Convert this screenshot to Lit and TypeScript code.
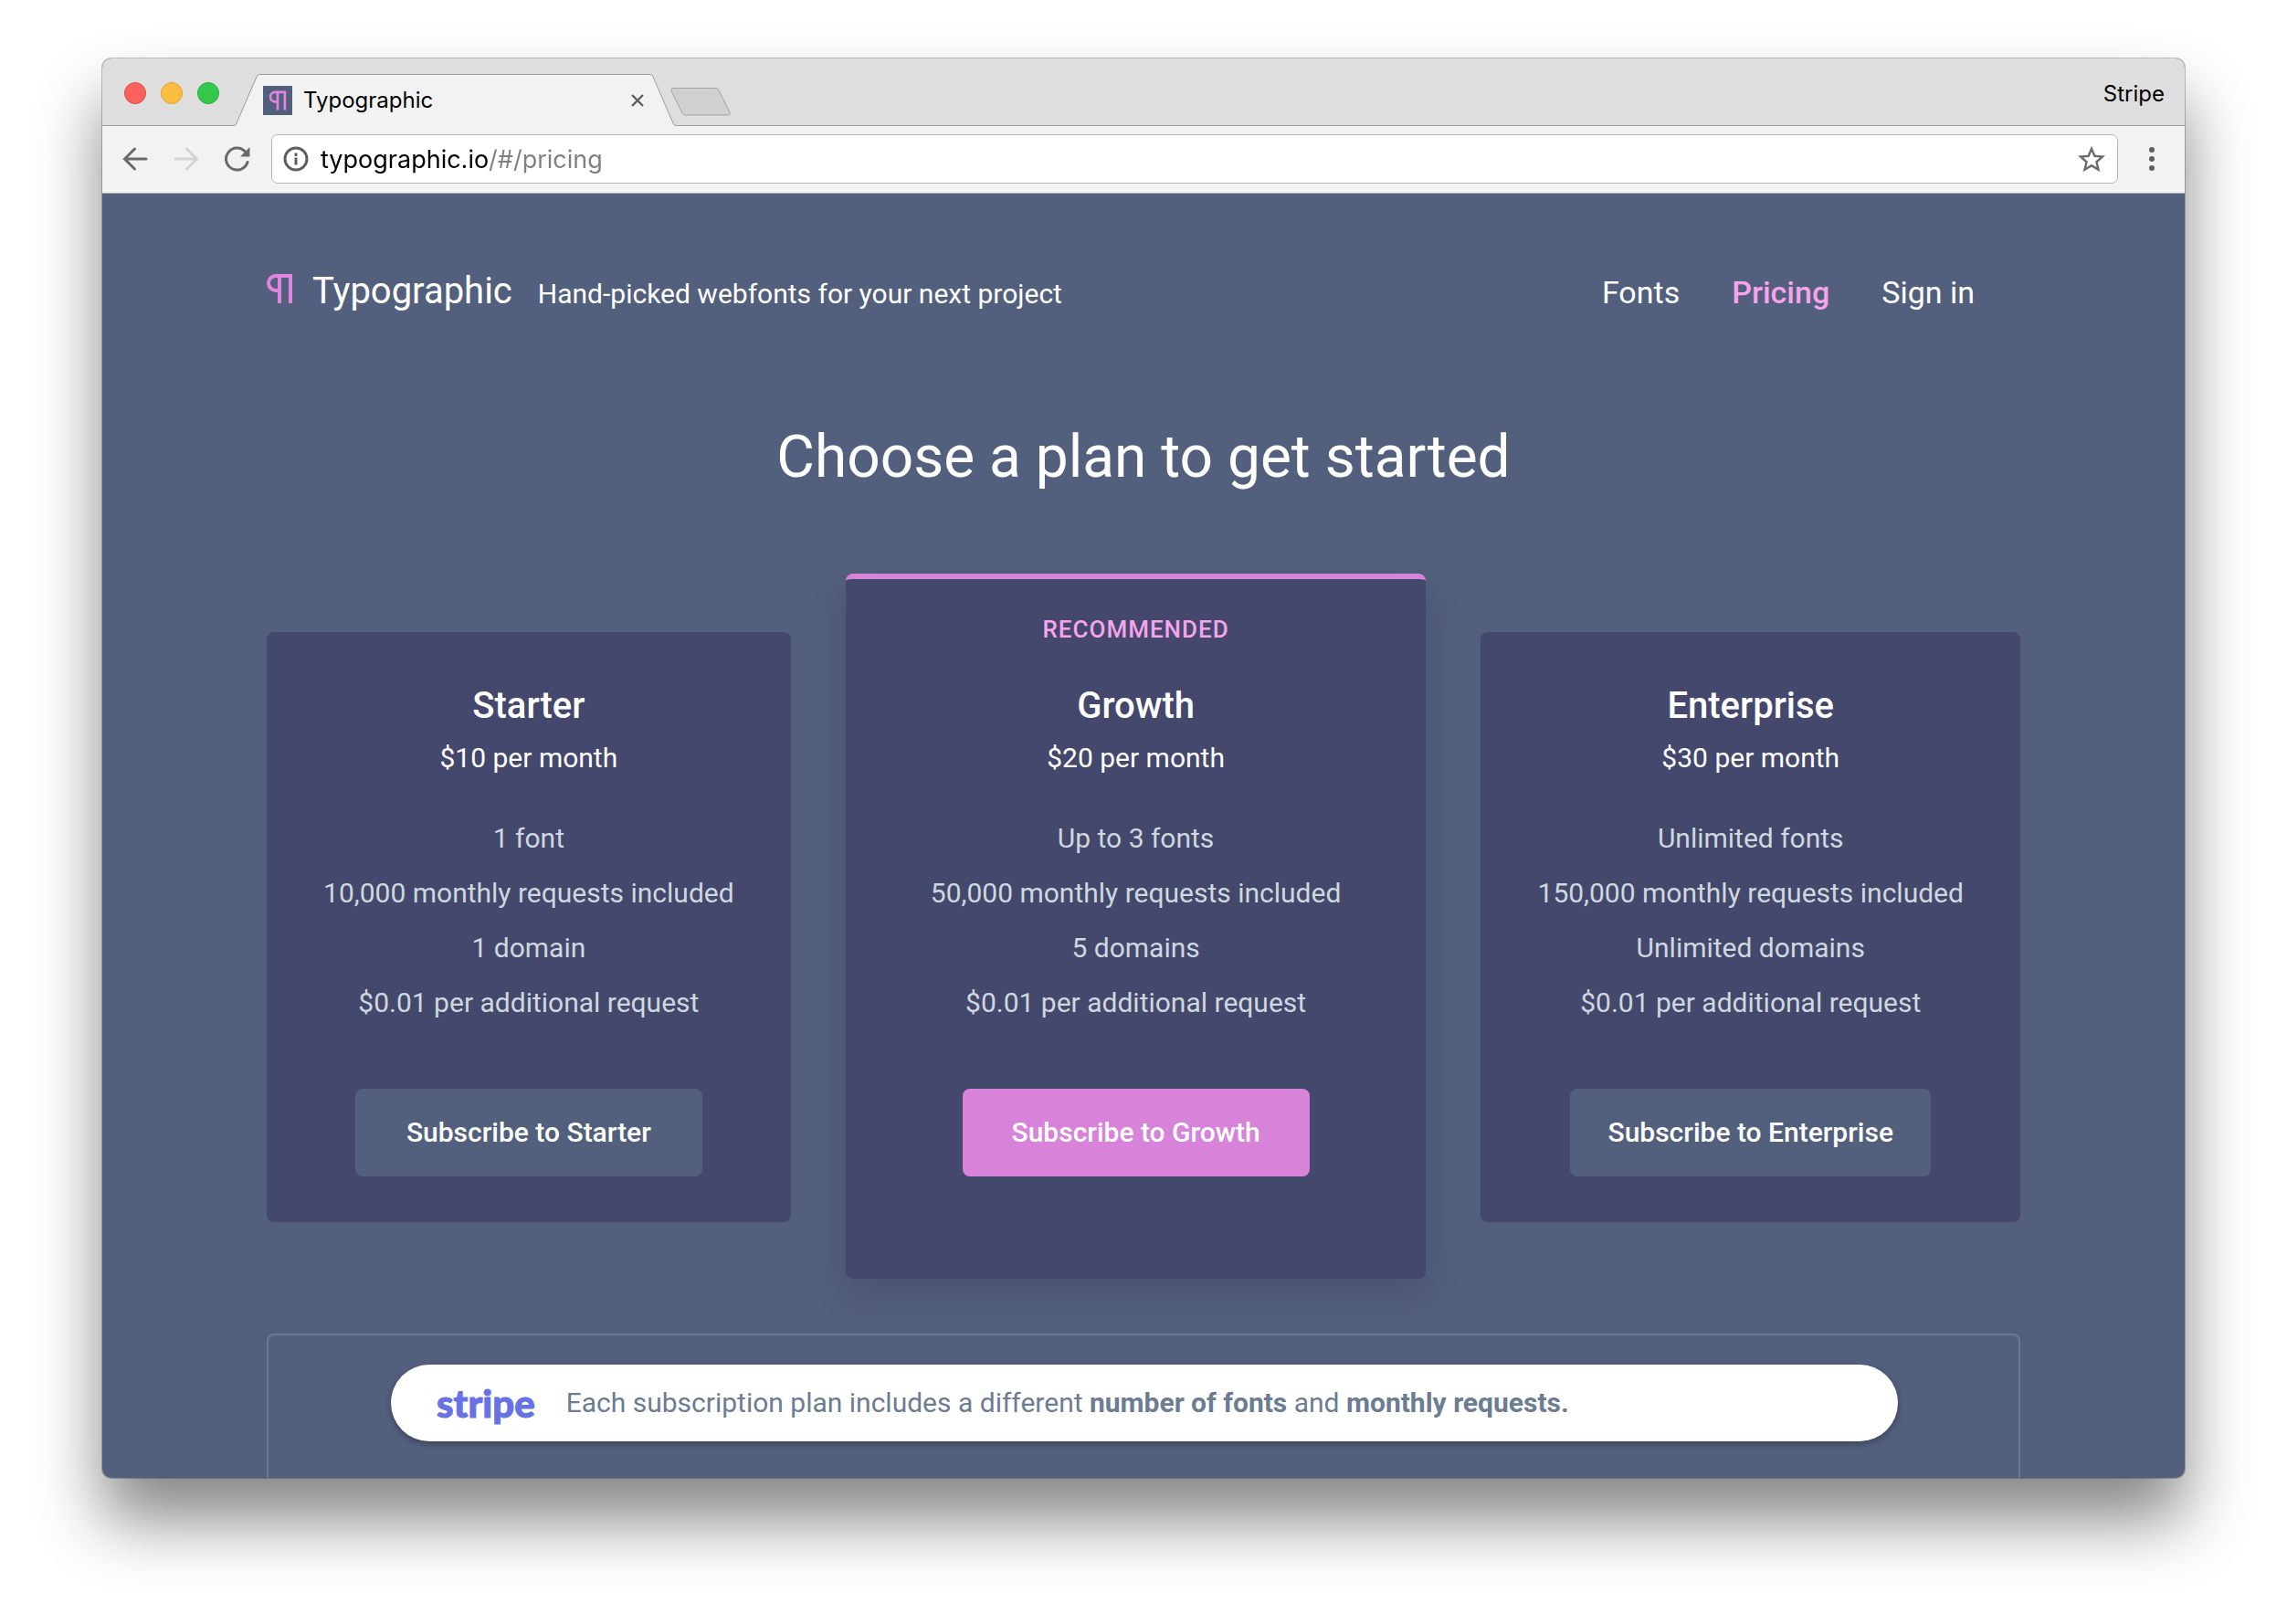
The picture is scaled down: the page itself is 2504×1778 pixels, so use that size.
import { LitElement, html, css, svg } from 'lit';
import { customElement, property } from 'lit/decorators.js';

interface Plan {
  name: string;
  price: string;
  features: string[];
  recommended?: boolean;
}

const PLANS: Plan[] = [
  {
    name: 'Starter',
    price: '$10 per month',
    features: ['1 font', '10,000 monthly requests included', '1 domain', '$0.01 per additional request'],
  },
  {
    name: 'Growth',
    price: '$20 per month',
    features: ['Up to 3 fonts', '50,000 monthly requests included', '5 domains', '$0.01 per additional request'],
    recommended: true,
  },
  {
    name: 'Enterprise',
    price: '$30 per month',
    features: ['Unlimited fonts', '150,000 monthly requests included', 'Unlimited domains', '$0.01 per additional request'],
  },
];

const pilcrow = svg`<path d="M28 2H10a8 8 0 0 0 0 16h4M14 2v30M26 2v30" fill="none" stroke="currentColor" stroke-width="4"/>`;

/** The browser's tab strip and toolbar. */
@customElement('browser-chrome')
export class BrowserChrome extends LitElement {
  static styles = css`
    :host {
      display: block;
      font-family: Inter, 'Liberation Sans', sans-serif;
      color: #000;
    }
    button {
      display: block;
      padding: 0;
      border: 0;
      background: none;
      color: #5f5f5f;
      cursor: pointer;
    }
    svg {
      display: block;
    }
    .strip {
      display: flex;
      align-items: center;
      box-sizing: border-box;
      min-height: 74px;
      padding: 2px 22px 0 24px;
      background: #dedede;
      border-bottom: 1px solid #9b9b9b;
    }
    .lights {
      display: flex;
      gap: 16px;
      margin-right: 16px;
    }
    .light {
      width: 24px;
      height: 24px;
      border-radius: 50%;
      border: 1px solid #e0443e;
      background: #fc615d;
    }
    .light.min {
      border-color: #dea034;
      background: #fdbd40;
    }
    .light.max {
      border-color: #27aa35;
      background: #34c84a;
    }
    .tab {
      position: relative;
      display: flex;
      align-items: center;
      align-self: flex-end;
      gap: 12px;
      box-sizing: border-box;
      width: 484px;
      height: 57px;
      margin-bottom: -1px;
      padding: 0 34px 0 32px;
    }
    .tab-shape {
      position: absolute;
      inset: 0;
      width: 100%;
      height: 100%;
    }
    .favicon {
      position: relative;
      flex: none;
      width: 32px;
      height: 32px;
      background: #525f7d;
      color: #e085e0;
    }
    .title {
      position: relative;
      flex: 1;
      font-size: 24px;
      line-height: 30px;
    }
    .close {
      position: relative;
    }
    .new-tab {
      align-self: flex-end;
      margin: 0 auto 10px -6px;
    }
    .profile {
      padding-top: 3px;
      font-size: 24px;
      line-height: 30px;
      color: #000;
      font-family: inherit;
    }
    .toolbar {
      display: flex;
      align-items: center;
      gap: 28px;
      padding: 9px 22px 10px;
      background: #f2f2f2;
      border-bottom: 1px solid #aeaeae;
    }
    .address {
      display: flex;
      flex: 1;
      align-items: center;
      gap: 12px;
      box-sizing: border-box;
      height: 54px;
      margin: 0 -5px;
      padding: 0 13px 0 12px;
      border: 1px solid #b4b4b4;
      border-radius: 7px;
      background: #fff;
    }
    .url {
      flex: 1;
      min-width: 0;
      padding: 2px 0 0 1px;
      border: 0;
      outline: 0;
      font: 27px/40px Inter, 'Liberation Sans', sans-serif;
      color: transparent;
      background: linear-gradient(to right, #000 185px, #7f7f7f 185px);
      -webkit-background-clip: text;
      background-clip: text;
    }
    .dim {
      color: #d4d4d4;
    }
  `;

  render() {
    return html`
      <div class="strip">
        <div class="lights">
          <button class="light" aria-label="Close window"></button>
          <button class="light min" aria-label="Minimize window"></button>
          <button class="light max" aria-label="Zoom window"></button>
        </div>
        <div class="tab">
          <svg class="tab-shape" viewBox="0 0 484 57" preserveAspectRatio="none" aria-hidden="true">
            <path d="M0 57v-.5q2 0 3-2.500L25 3Q26 .5 28 .5H456Q458 .5 459 3L481 54q1 2.500 3 2.500v.5z" fill="#f2f2f2" />
            <path d="M0 56.500q2 0 3-2.500L25 3Q26 .5 28 .5H456Q458 .5 459 3L481 54q1 2.500 3 2.500" fill="none" stroke="#9b9b9b" />
          </svg>
          <svg class="favicon" viewBox="0 0 32 32" aria-hidden="true">
            <g transform="translate(6.700 5.500) scale(.66)">${pilcrow}</g>
          </svg>
          <span class="title">Typographic</span>
          <button class="close" aria-label="Close tab">
            <svg width="16" height="16" viewBox="0 0 16 16"><path d="M2 2l12 12M14 2L2 14" stroke="currentColor" stroke-width="2.400" /></svg>
          </button>
        </div>
        <button class="new-tab" aria-label="New tab">
          <svg width="66" height="31" viewBox="0 0 66 31">
            <path d="M3 .5H49q3 0 4 2.500L65 27q1 3-2 3H17q-3 0-4-2.500L1 3.500Q0 .5 3 .5z" fill="#d0d0d0" stroke="#a3a3a3" />
          </svg>
        </button>
        <button class="profile">Stripe</button>
      </div>
      <div class="toolbar">
        <button aria-label="Back">
          <svg width="28" height="28" viewBox="0 0 28 28" fill="none" stroke="#6a6a6a" stroke-width="3" stroke-linecap="round">
            <path d="M3 14H26M13.500 3L2.500 14l11 11" />
          </svg>
        </button>
        <button class="dim" aria-label="Forward">
          <svg width="28" height="28" viewBox="0 0 28 28" fill="none" stroke="currentColor" stroke-width="3" stroke-linecap="round">
            <path d="M25 14H2M14.500 3l11 11-11 11" />
          </svg>
        </button>
        <button aria-label="Reload">
          <svg width="28" height="28" viewBox="0 0 28 28" fill="none">
            <path d="M25 17.500A12 12 0 1 1 22 5.500" stroke="#6a6a6a" stroke-width="3" stroke-linecap="round" />
            <path d="M17 11.500H27.500V1z" fill="#6a6a6a" />
          </svg>
        </button>
        <div class="address">
          <svg width="28" height="28" viewBox="0 0 28 28" fill="none" stroke="#5f5f5f" stroke-width="3" aria-hidden="true">
            <circle cx="14" cy="14" r="12" />
            <path d="M14 7.500v3.500M14 12.500v8" />
          </svg>
          <input class="url" type="text" aria-label="Address" spellcheck="false" value="typographic.io/#/pricing" />
          <button aria-label="Bookmark this page">
            <svg width="30" height="30" viewBox="2 1.500 20 20">
              <path fill="#6a6a6a" d="M22 9.240l-7.190-.62L12 2 9.190 8.630 2 9.240l5.460 4.730L5.820 21 12 17.270 18.180 21l-1.630-7.030L22 9.240zM12 15.400l-3.760 2.270 1-4.280-3.320-2.880 4.380-.38L12 6.100l1.710 4.040 4.380.38-3.320 2.880 1 4.280L12 15.400z" />
            </svg>
          </button>
        </div>
        <button aria-label="Menu">
          <svg width="28" height="28" viewBox="0 0 28 28" fill="currentColor">
            <circle cx="14" cy="4" r="3" /><circle cx="14" cy="14" r="3" /><circle cx="14" cy="24" r="3" />
          </svg>
        </button>
      </div>
    `;
  }
}

@customElement('plan-card')
export class PlanCard extends LitElement {
  @property({ attribute: false }) plan!: Plan;

  static styles = css`
    :host {
      display: block;
    }
    .card {
      display: flex;
      flex-direction: column;
      align-items: center;
      padding: 53px 60px 50px;
      border-radius: 8px;
      background: #43486c;
      color: #fff;
      text-align: center;
    }
    .card.recommended {
      padding: 40px 91px 112px;
      border-top: 6px solid #d683d9;
      box-shadow: 0 16px 40px rgba(0, 0, 0, 0.12);
    }
    .badge {
      margin: 0 0 41px;
      font-size: 26px;
      font-weight: 500;
      line-height: 30px;
      letter-spacing: 1px;
      text-transform: uppercase;
      color: #f6a4eb;
    }
    .name {
      margin: 0;
      font-size: 40px;
      font-weight: 500;
      line-height: 56px;
    }
    .price {
      margin: 0 0 29px;
      line-height: 58px;
    }
    .features {
      margin: 0 0 64px;
      padding: 0;
      list-style: none;
      line-height: 60px;
      color: #cfd7df;
    }
    .subscribe {
      min-width: 380px;
      min-height: 96px;
      padding: 0 41px;
      border: 0;
      border-radius: 8px;
      background: #525f7d;
      color: #fff;
      font: inherit;
      font-weight: 500;
      cursor: pointer;
    }
    .recommended .subscribe {
      background: #d683d9;
    }
  `;

  render() {
    const { name, price, features, recommended } = this.plan;
    return html`
      <article class="card ${recommended ? 'recommended' : ''}">
        ${recommended ? html`<p class="badge">Recommended</p>` : ''}
        <h2 class="name">${name}</h2>
        <p class="price">${price}</p>
        <ul class="features">
          ${features.map((f) => html`<li>${f}</li>`)}
        </ul>
        <button class="subscribe">Subscribe to ${name}</button>
      </article>
    `;
  }
}

@customElement('app-root')
export class AppRoot extends LitElement {
  static styles = css`
    :host {
      display: block;
      box-sizing: border-box;
      min-height: 100vh;
      padding: 64px 112px 160px;
      background: #fff;
      font: 30px/40px Roboto, 'Liberation Sans', sans-serif;
    }
    .window {
      overflow: hidden;
      border-radius: 10px;
      background: #525f7d;
      box-shadow: 0 0 0 1px rgba(0, 0, 0, 0.24), 0 46px 72px rgba(0, 0, 0, 0.48);
    }
    .page {
      padding: 83px 180px 0;
      color: #fff;
    }
    .header {
      display: flex;
      align-items: baseline;
      padding-right: 50px;
      margin-bottom: 118px;
    }
    a {
      color: inherit;
      text-decoration: none;
    }
    .brand {
      display: flex;
      align-items: baseline;
      gap: 22px;
      margin-right: 28px;
      font-size: 40px;
      line-height: 48px;
    }
    .mark {
      color: #e085e0;
    }
    .tagline {
      margin: 0;
    }
    .nav {
      display: flex;
      gap: 57px;
      margin-left: auto;
      font-size: 34px;
    }
    .nav .active {
      font-weight: 500;
      color: #f6a4eb;
    }
    .heading {
      margin: 0 0 87px;
      font-size: 64px;
      font-weight: 400;
      line-height: 80px;
      text-align: center;
    }
    .plans {
      display: flex;
      align-items: flex-start;
      gap: 60px;
      margin-bottom: 60px;
    }
    .plan {
      flex: 1 1 auto;
      margin-top: 64px;
    }
    .plan.raised {
      margin-top: 0;
    }
    .panel {
      padding: 32px 132px 40px 134px;
      border: 2px solid #6b7a94;
      border-bottom: 0;
      border-radius: 8px 8px 0 0;
    }
    .note {
      display: flex;
      align-items: center;
      gap: 34px;
      min-height: 84px;
      padding: 0 50px;
      border-radius: 42px;
      background: #fff;
      box-shadow: 0 3px 6px rgba(0, 0, 0, 0.28);
      color: #6b7c93;
    }
    .note p {
      margin: 0;
    }
    .note b {
      font-weight: 700;
    }
    .stripe {
      color: #6772e5;
      font: 900 42px/48px Lato, 'Open Sans', sans-serif;
      -webkit-text-stroke: 1px #6772e5;
    }
  `;

  render() {
    return html`
      <div class="window">
        <browser-chrome></browser-chrome>
        <main class="page">
          <header class="header">
            <a class="brand" href="#/">
              <svg class="mark" width="28" height="32" viewBox="0 0 28 32" aria-hidden="true">${pilcrow}</svg>
              <span>Typographic</span>
            </a>
            <p class="tagline">Hand-picked webfonts for your next project</p>
            <nav class="nav">
              <a href="#/fonts">Fonts</a>
              <a class="active" href="#/pricing" aria-current="page">Pricing</a>
              <a href="#/signin">Sign in</a>
            </nav>
          </header>
          <h1 class="heading">Choose a plan to get started</h1>
          <section class="plans">
            ${PLANS.map((p) => html`<plan-card class="plan ${p.recommended ? 'raised' : ''}" .plan=${p}></plan-card>`)}
          </section>
          <section class="panel">
            <div class="note">
              <span class="stripe">stripe</span>
              <p>Each subscription plan includes a different <b>number of fonts</b> and <b>monthly requests.</b></p>
            </div>
          </section>
        </main>
      </div>
    `;
  }
}
